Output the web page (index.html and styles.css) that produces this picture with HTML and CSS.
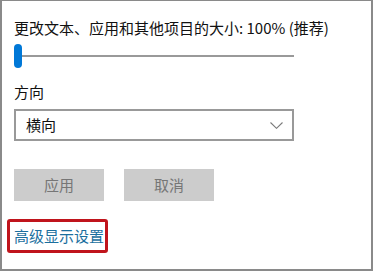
FILE: index.html
```html
<!DOCTYPE html>
<html lang="zh-CN">
<head>
<meta charset="utf-8">
<link rel="stylesheet" href="styles.css">
</head>
<body>
<div class="panel">
  <div class="title">更改文本、应用和其他项目的大小: 100% (推荐)</div>
  <div class="slider">
    <div class="track"></div>
    <div class="thumb"></div>
  </div>
  <div class="label">方向</div>
  <div class="select">
    <span class="select-text">横向</span>
    <svg class="chevron" width="13" height="7" viewBox="0 0 13 7"><path d="M0.5 0.5 L6.5 6.3 L12.5 0.5" fill="none" stroke="#7a7a7a" stroke-width="1.1"/></svg>
  </div>
  <div class="buttons">
    <div class="btn">应用</div>
    <div class="btn">取消</div>
  </div>
  <div class="link-row">
    <span class="link">高级显示设置</span>
  </div>
</div>
</body>
</html>
```
FILE: styles.css
```css
html, body {
  margin: 0;
  padding: 0;
  background: #ffffff;
}
.panel {
  box-sizing: border-box;
  width: 373px;
  height: 271px;
  border: 2px solid #8a8a8a;
  border-top-width: 1px;
  padding: 17px 12px 0 12px;
  font-family: "Noto Sans CJK SC", "Noto Sans", sans-serif;
  font-size: 15px;
  line-height: 20px;
  color: #111111;
  display: flex;
  flex-direction: column;
  align-items: flex-start;
}
.title {
  white-space: nowrap;
}
.slider {
  position: relative;
  width: 280px;
  height: 24px;
  margin-top: 6px;
}
.track {
  position: absolute;
  left: 0;
  right: 0;
  top: 11px;
  height: 2px;
  background: #999999;
}
.thumb {
  position: absolute;
  left: 0;
  top: 0;
  width: 8px;
  height: 24px;
  border-radius: 4px;
  background: #0078d7;
}
.label {
  margin-top: 14px;
}
.select {
  box-sizing: border-box;
  width: 280px;
  height: 32px;
  margin-top: 7px;
  border: 2px solid #999999;
  padding: 0 9px 0 10px;
  display: flex;
  align-items: center;
  justify-content: space-between;
}
.chevron {
  display: block;
  margin-top: 1px;
}
.buttons {
  display: flex;
  gap: 20px;
  margin-top: 28px;
}
.btn {
  width: 90px;
  height: 32px;
  background: #cccccc;
  color: #767676;
  display: flex;
  align-items: center;
  justify-content: center;
}
.link-row {
  margin-top: 25px;
}
.link {
  position: relative;
  display: inline-block;
  color: #1b6f9e;
}
.link::after {
  content: "";
  position: absolute;
  left: -7px;
  right: -4px;
  top: -7px;
  bottom: -7px;
  border: 3px solid #c0141c;
  border-radius: 3px;
}
```
